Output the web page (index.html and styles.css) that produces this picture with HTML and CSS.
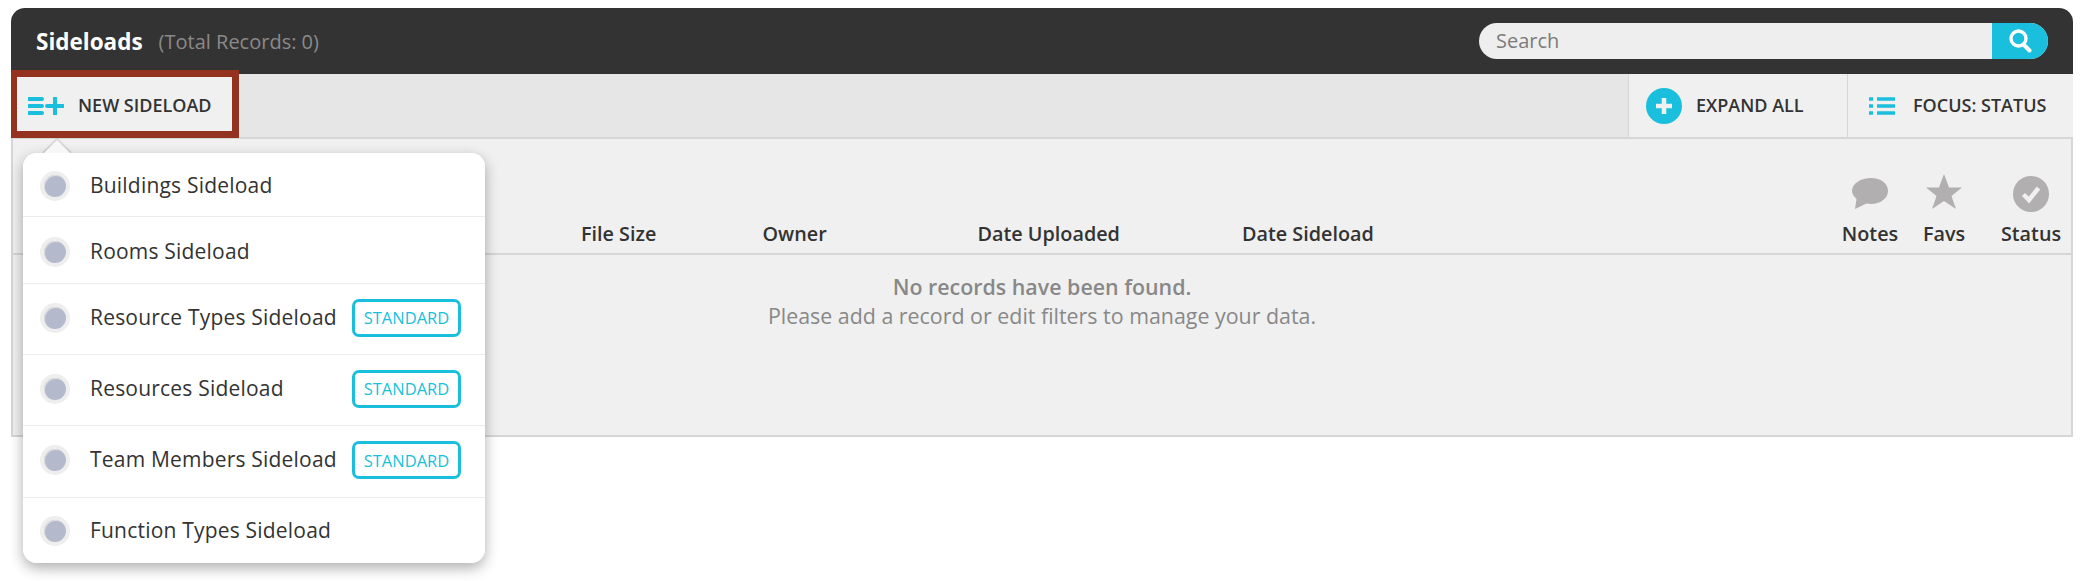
FILE: index.html
```html
<!DOCTYPE html>
<html lang="en">
<head>
<meta charset="utf-8">
<title>Sideloads</title>
<link rel="stylesheet" href="styles.css">
</head>
<body>
<div class="panel">
  <header class="head">
    <h1 class="title">Sideloads</h1>
    <span class="total">(Total Records: 0)</span>
    <div class="search">
      <span class="search-text">Search</span>
      <span class="search-btn">
        <svg width="24" height="26" viewBox="0 0 24 26"><circle cx="10.5" cy="10.5" r="7.5" fill="none" stroke="#fff" stroke-width="3.4"/><path d="M15.5 16.5l6 6" stroke="#fff" stroke-width="4" stroke-linecap="round"/></svg>
      </span>
    </div>
  </header>
  <div class="toolbar">
    <button class="tool tool-new">
      <svg width="36" height="18" viewBox="0 0 36 18"><path d="M1 2h13M1 9h13M1 16h13M19 9h16M27 1v16" stroke="#19bfdc" stroke-width="4" stroke-linecap="round" fill="none"/></svg>
      <span>NEW SIDELOAD</span>
    </button>
    <span class="highlight"></span>
    <div class="tool-right">
      <button class="tool tool-expand">
        <svg width="36" height="36" viewBox="0 0 36 36"><circle cx="18" cy="18" r="18" fill="#19bfdc"/><path d="M18 10v16M10 18h16" stroke="#f0f0f0" stroke-width="4.500"/></svg>
        <span>EXPAND ALL</span>
      </button>
      <button class="tool tool-focus">
        <svg width="26" height="18" viewBox="0 0 26 18"><path d="M0 2h4M0 9h4M0 16h4M8 2h18M8 9h18M8 16h18" stroke="#19bfdc" stroke-width="3.400" fill="none"/></svg>
        <span>FOCUS: STATUS</span>
      </button>
    </div>
  </div>
  <div class="table-head">
    <span class="col col-size">File Size</span>
    <span class="col col-owner">Owner</span>
    <span class="col col-up">Date Uploaded</span>
    <span class="col col-side">Date Sideload</span>
    <div class="col-icon col-notes">
      <svg width="36" height="38" viewBox="0 0 36 38"><path d="M19 4c10 0 17 5.400 17 13s-8 13-17 13c-1.500 0-3-.2-4.500-.5L3 35l1.500-10C2 22.500 0 20 0 17 0 9.400 9 4 19 4z" fill="#b1afaf"/></svg>
      <span>Notes</span>
    </div>
    <div class="col-icon col-favs">
      <svg width="36" height="38" viewBox="0 0 36 38"><path d="M18 0l5 13.500h13L25.500 22 30 35 18 27 6 35l4.500-13L0 13.500h13z" fill="#b1afaf"/></svg>
      <span>Favs</span>
    </div>
    <div class="col-icon col-status">
      <svg width="36" height="38" viewBox="0 0 36 38"><circle cx="18" cy="20" r="18" fill="#b1afaf"/><path d="M10.500 20.500l5.500 5.500 9.500-12" stroke="#f0f0f0" stroke-width="4.500" fill="none"/></svg>
      <span>Status</span>
    </div>
  </div>
  <div class="empty">
    <strong class="empty-title">No records have been found.</strong>
    <p class="empty-sub">Please add a record or edit filters to manage your data.</p>
  </div>
  <div class="menu">
    <span class="arrow"></span>
    <ul class="menu-list">
      <li class="item item-first"><span class="radio"></span><span class="label">Buildings Sideload</span></li>
      <li class="item item-second"><span class="radio"></span><span class="label">Rooms Sideload</span></li>
      <li class="item item-badge"><span class="radio"></span><span class="label">Resource Types Sideload</span><span class="badge">STANDARD</span></li>
      <li class="item item-badge"><span class="radio"></span><span class="label">Resources Sideload</span><span class="badge">STANDARD</span></li>
      <li class="item item-badge item-tall"><span class="radio"></span><span class="label">Team Members Sideload</span><span class="badge">STANDARD</span></li>
      <li class="item item-last"><span class="radio"></span><span class="label">Function Types Sideload</span></li>
    </ul>
  </div>
</div>
</body>
</html>
```
FILE: styles.css
```css
* { box-sizing: border-box; }
html, body { background: #fff; }
body {
  margin: 8px 12px 0 11px;
  min-height: calc(100vh - 8px);
  font-family: "Open Sans", "Liberation Sans", sans-serif;
  color: #333;
}
.panel { position: relative; }

.head {
  height: 66px;
  background: #333;
  border-radius: 14px 14px 0 0;
  display: flex;
  align-items: center;
  padding: 0 25px;
}
.title { margin: 0; font-size: 22.500px; font-weight: 700; color: #fff; }
.total { margin-left: 16px; font-size: 20px; color: #8a8a8a; }
.search {
  margin-left: auto;
  width: 569px;
  height: 36px;
  border-radius: 18px;
  background: #eee;
  display: flex;
  align-items: center;
  justify-content: space-between;
  overflow: hidden;
}
.search-text { padding: 0 0 2px 17px; font-size: 20px; color: #7b7b7b; }
.search-btn {
  width: 56px;
  height: 36px;
  background: #19bfdc;
  display: flex;
  align-items: center;
  justify-content: center;
}

.toolbar {
  position: relative;
  height: 65px;
  background: #e6e6e6;
  border-bottom: 2px solid #d6d6d6;
  display: flex;
  justify-content: space-between;
}
.tool {
  border: 0;
  padding: 0;
  background: #f0f0f0;
  display: flex;
  align-items: center;
  font: 600 18px "Open Sans", sans-serif;
  color: #333;
}
.tool span { margin-bottom: 2px; }
.tool-new { width: 221px; padding-left: 17px; gap: 14px; }
.tool-right { display: flex; }
.tool-expand { width: 219px; padding-left: 17px; gap: 14px; border-left: 1px solid #d6d6d6; }
.tool-focus { width: 226px; padding-left: 21px; gap: 18px; border-left: 1px solid #d6d6d6; }
.highlight {
  position: absolute;
  left: -1px;
  top: -4px;
  width: 229px;
  height: 68px;
  border: 7px solid #93331f;
}

.table-head {
  position: relative;
  height: 116px;
  background: #f0f0f0;
  border: solid #d6d6d6;
  border-width: 0 2px 2px 2px;
  display: flex;
  align-items: flex-end;
  padding-bottom: 7px;
  font-size: 19.800px;
  font-weight: 600;
  line-height: 25px;
}
.col { white-space: nowrap; }
.col-size { margin-left: 568px; width: 181.500px; }
.col-owner { width: 215px; }
.col-up { width: 264.500px; }
.col-icon {
  width: 60px;
  display: flex;
  flex-direction: column;
  align-items: center;
  gap: 9px;
}
.col-notes { margin-left: auto; }
.col-favs { margin-left: 14px; }
.col-status { margin-left: 27px; margin-right: 10px; }

.empty {
  background: #f0f0f0;
  height: 182px;
  border: solid #d6d6d6;
  border-width: 0 2px 2px 2px;
  text-align: center;
  color: #888;
  font-size: 21.400px;
  padding-top: 17px;
}
.empty-title { display: block; font-weight: 600; line-height: 29px; }
.empty-sub { margin: 0; line-height: 29px; }

.menu {
  position: absolute;
  left: 12px;
  top: 145px;
  width: 462px;
  background: #fff;
  border-radius: 14px;
  box-shadow: 0 5px 14px rgba(0, 0, 0, .32);
}
.arrow {
  position: absolute;
  left: 24px;
  top: -9px;
  width: 20px;
  height: 20px;
  background: #f7f7f7;
  box-shadow: -1px -1px 2px rgba(0, 0, 0, .2);
  transform: rotate(45deg);
}
.menu-list {
  position: relative;
  list-style: none;
  margin: 0;
  padding: 0;
  background: #fff;
  border-radius: 14px;
}
.item {
  display: flex;
  align-items: center;
  padding: 3px 24px 0 17px;
  border-bottom: 1px solid #ececec;
}
.item-first { height: 64px; }
.item-second { height: 67px; }
.item-badge { height: 71px; padding-top: 0; padding-bottom: 3px; }
.item-tall { height: 72px; }
.item-last { height: 65px; padding-top: 1px; border-bottom: 0; }
.radio {
  flex: none;
  width: 30px;
  height: 30px;
  border-radius: 50%;
  background: #b4b9cc;
  border: 4px solid #eee;
  box-shadow: inset 1px 1px 0 #ddd;
}
.label {
  margin-left: 20px;
  font-size: 21px;
  letter-spacing: .2px;
  color: #333;
  white-space: nowrap;
  position: relative;
  top: -1px;
}
.badge {
  margin-left: auto;
  width: 109px;
  height: 38px;
  border: 3px solid #19bfdc;
  border-radius: 7px;
  color: #19bfdc;
  font-size: 16.500px;
  display: flex;
  align-items: center;
  justify-content: center;
}
```
